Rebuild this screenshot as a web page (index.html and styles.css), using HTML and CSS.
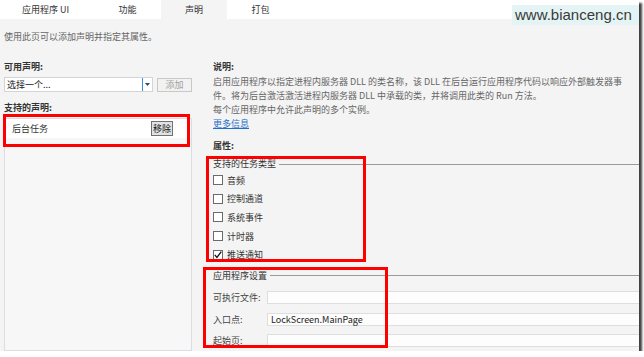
FILE: index.html
```html
<!DOCTYPE html>
<html lang="zh-CN">
<head>
<meta charset="utf-8">
<title>声明</title>
<link rel="stylesheet" href="styles.css">
</head>
<body>
<div class="window">
  <div class="tabs">
    <div class="tab t1">应用程序 UI</div>
    <div class="tab t2">功能</div>
    <div class="tab t3 active">声明</div>
    <div class="tab t4">打包</div>
  </div>
  <div class="intro">使用此页可以添加声明并指定其属性。</div>
  <div class="main">
    <div class="left">
      <div class="heading">可用声明:</div>
      <div class="pick-row">
        <div class="select">
          <span class="select-text">选择一个...</span>
          <span class="select-btn"><svg width="5" height="3" viewBox="0 0 5 3"><path d="M0 0H5L2.5 3Z" fill="#2b4a73"/></svg></span>
        </div>
        <div class="btn disabled">添加</div>
      </div>
      <div class="heading h2">支持的声明:</div>
      <div class="list">
        <div class="list-item"><span>后台任务</span><span class="btn remove">移除</span></div>
      </div>
    </div>
    <div class="right">
      <div class="heading">说明:</div>
      <p class="desc">启用应用程序以指定进程内服务器 DLL 的类名称，该 DLL 在后台运行应用程序代码以响应外部触发器事<br>件。将为后台激活激活进程内服务器 DLL 中承载的类，并将调用此类的 Run 方法。</p>
      <p class="desc d2">每个应用程序中允许此声明的多个实例。</p>
      <a class="more">更多信息</a>
      <div class="heading props">属性:</div>
      <div class="group g1">
        <div class="group-title"><span>支持的任务类型</span></div>
        <div class="check"><span class="box"></span>音频</div>
        <div class="check"><span class="box"></span>控制通道</div>
        <div class="check"><span class="box"></span>系统事件</div>
        <div class="check"><span class="box"></span>计时器</div>
        <div class="check"><span class="box"><svg width="10" height="10" viewBox="0 0 10 10"><path d="M1.8 4.8L3.9 7.4L8.3 1.6" fill="none" stroke="#111" stroke-width="1.3"/></svg></span>推送通知</div>
      </div>
      <div class="group g2">
        <div class="group-title"><span>应用程序设置</span></div>
        <div class="field"><span class="label">可执行文件:</span><span class="input"></span></div>
        <div class="field"><span class="label">入口点:</span><span class="input">LockScreen.MainPage</span></div>
        <div class="field"><span class="label">起始页:</span><span class="input"></span></div>
      </div>
    </div>
  </div>
  <div class="mark m1"></div>
  <div class="mark m2"></div>
  <div class="mark m3"></div>
  <div class="watermark">www.bianceng.cn</div>
</div>
</body>
</html>
```

FILE: styles.css
```css
html, body {
  margin: 0;
  padding: 0;
  background: #ffffff;
}

.window {
  position: relative;
  width: 639px;
  height: 351px;
  background: #f4f4f4;
  box-shadow: 3px 3px 2px rgba(0, 0, 0, 0.75);
  overflow: hidden;
  display: flex;
  flex-direction: column;
  font-family: "Noto Sans CJK SC", "Noto Sans", sans-serif;
  font-size: 9px;
  color: #333;
}

.tabs {
  display: flex;
  height: 19px;
  background: #ffffff;
  flex: none;
}

.tab {
  line-height: 20px;
  text-align: center;
  color: #333;
}

.t1 { width: 91px; }
.t2 { width: 67px; padding-left: 3px; }
.t3 { width: 66px; }
.t4 { width: 67px; }

.tab.active {
  background: #f4f4f4;
}

.intro {
  margin-top: 11px;
  padding-left: 4px;
  line-height: 14px;
  color: #666;
  flex: none;
}

.main {
  flex: 1;
  display: flex;
  padding-top: 16px;
  min-height: 0;
}

.left {
  margin-left: 4px;
  width: 188px;
  display: flex;
  flex-direction: column;
}

.heading {
  font-weight: bold;
  line-height: 14px;
  color: #333;
}

.pick-row {
  display: flex;
  align-items: center;
  margin-top: 3px;
  height: 15px;
}

.select {
  width: 149px;
  height: 15px;
  box-sizing: border-box;
  border: 1px solid #d4d4d4;
  background: #ffffff;
  display: flex;
  align-items: center;
}

.select-text {
  flex: 1;
  padding-left: 2px;
  color: #222;
  line-height: 13px;
}

.select-btn {
  width: 9px;
  height: 13px;
  border-left: 1px solid #3d8fe0;
  display: flex;
  align-items: center;
  justify-content: center;
}

.btn {
  box-sizing: border-box;
  text-align: center;
}

.btn.disabled {
  margin-left: 4px;
  width: 35px;
  height: 14px;
  line-height: 12px;
  border: 1px solid #c8c8c8;
  background: #f2f2f2;
  color: #a0a0a0;
}

.h2 {
  margin-top: 9px;
}

.list {
  margin-top: 3px;
  flex: 1;
  border: 1px solid #dcdce2;
  background: #f7f7f7;
}

.list-item {
  height: 19px;
  background: #ffffff;
  display: flex;
  align-items: center;
  justify-content: space-between;
  padding: 0 18px 0 7px;
  color: #333;
}

.btn.remove {
  width: 22px;
  height: 15px;
  line-height: 13px;
  border: 1px solid #707070;
  background: #e2e2e2;
  color: #111;
}

.right {
  margin-left: 21px;
  flex: 1;
  min-width: 0;
}

.desc {
  margin: 1px 0 0;
  line-height: 14px;
  color: #666;
  white-space: nowrap;
}

.desc.d2 {
  margin-top: 0;
}

.more {
  display: block;
  line-height: 14px;
  color: #1e6fc8;
  text-decoration: underline;
}

.props {
  margin-top: 8px;
}

.group-title {
  display: flex;
  align-items: center;
  line-height: 14px;
  color: #333;
}

.group-title::after {
  content: "";
  flex: 1;
  margin-left: 3px;
  border-top: 1px solid #9a9a9a;
}

.g1 {
  margin-top: 4px;
}

.check {
  height: 18.6px;
  display: flex;
  align-items: center;
  color: #333;
}

.box {
  width: 10px;
  height: 10px;
  box-sizing: border-box;
  border: 1px solid #6b6b6b;
  background: #ffffff;
  margin-right: 4px;
  display: flex;
  align-items: center;
  justify-content: center;
}

.box svg {
  flex: none;
}

.g2 {
  margin-top: 5px;
}

.g2 .group-title {
  margin-bottom: 3.7px;
}

.field {
  height: 21.7px;
  display: flex;
  align-items: center;
}

.label {
  width: 54px;
  color: #444;
}

.input {
  flex: 1;
  height: 13px;
  line-height: 12px;
  box-sizing: border-box;
  border: 1px solid #dedede;
  background: #fdfdfd;
  margin-right: -3px;
  padding-left: 3px;
  color: #222;
}

.mark {
  position: absolute;
  box-sizing: border-box;
  border: 3px solid #ff0000;
}

.m1 { left: 3px; top: 114px; width: 187px; height: 33px; }
.m2 { left: 206px; top: 156px; width: 160px; height: 106px; }
.m3 { left: 203px; top: 267px; width: 185px; height: 81px; }

.watermark {
  position: absolute;
  left: 512px;
  top: 5px;
  width: 127px;
  height: 20px;
  box-sizing: border-box;
  padding-left: 3px;
  background: #e4f4f4;
  font-family: "Liberation Sans", Arial, sans-serif;
  font-size: 15px;
  line-height: 20px;
  color: #3a3a3a;
}
```
